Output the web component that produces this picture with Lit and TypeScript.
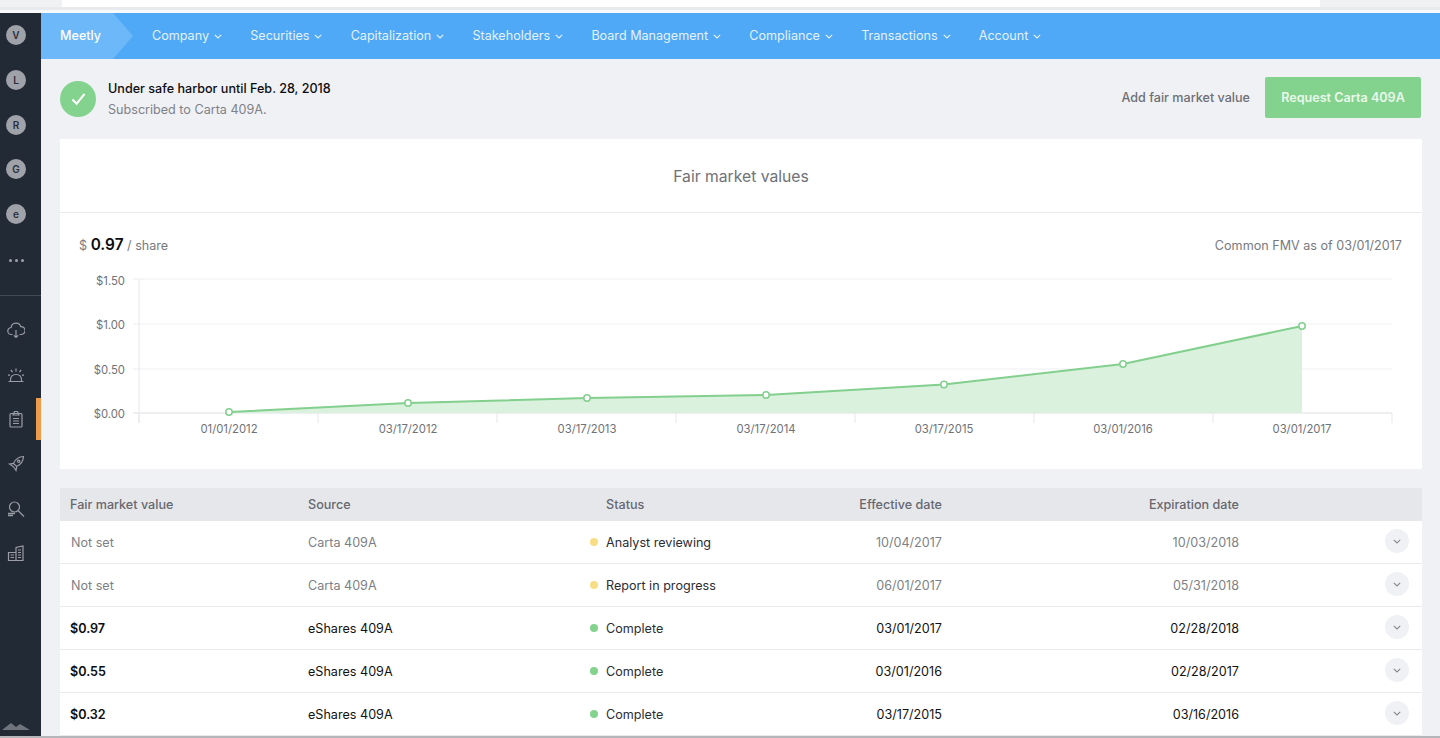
import { LitElement, html, css, svg } from "lit";
import { customElement } from "lit/decorators.js";

const navItems = [
  "Company",
  "Securities",
  "Capitalization",
  "Stakeholders",
  "Board Management",
  "Compliance",
  "Transactions",
  "Account",
];

const avatars = ["V", "L", "R", "G", "e"];

const rows = [
  { value: "Not set", source: "Carta 409A", status: "Analyst reviewing", effective: "10/04/2017", expiration: "10/03/2018", pending: true },
  { value: "Not set", source: "Carta 409A", status: "Report in progress", effective: "06/01/2017", expiration: "05/31/2018", pending: true },
  { value: "$0.97", source: "eShares 409A", status: "Complete", effective: "03/01/2017", expiration: "02/28/2018", pending: false },
  { value: "$0.55", source: "eShares 409A", status: "Complete", effective: "03/01/2016", expiration: "02/28/2017", pending: false },
  { value: "$0.32", source: "eShares 409A", status: "Complete", effective: "03/17/2015", expiration: "03/16/2016", pending: false },
];

// chart coordinates are relative to the card (x - 60, y - 265 on the page)
const points = [
  [169, 147],
  [348, 138],
  [527, 133],
  [706, 130],
  [884, 119.5],
  [1063, 99],
  [1242, 61],
];
const xLabels = ["01/01/2012", "03/17/2012", "03/17/2013", "03/17/2014", "03/17/2015", "03/01/2016", "03/01/2017"];
const yTicks = [
  { y: 14, label: "$1.50" },
  { y: 59, label: "$1.00" },
  { y: 104, label: "$0.50" },
  { y: 148, label: "$0.00" },
];
const xTicks = [79, 258, 437, 616, 795, 974, 1153, 1332];

const sideIcons = [
  svg`<path d="M5.500 13.500H4.500a3.500 3.500 0 0 1-.4-7A5 5 0 0 1 13.800 5.600a3.900 3.900 0 0 1 .6 7.900H12.500"/><path d="M9 9v7.500M6.800 14.300 9 16.500l2.200-2.200"/>`,
  svg`<path d="M1.500 15.500h15M3.500 15.500V14c0-3.500 2.200-5.500 5.500-5.500s5.500 2 5.500 5.500v1.500"/><path d="M9 2.500v3M3.800 4l1.800 2.200M14.200 4l-1.800 2.200M1 9.200h2M15 9.200h2"/>`,
  svg`<rect x="3" y="3.500" width="12" height="13.500" rx="1"/><path d="M6.500 3.500 7.500 1.500h3l1 2 .5 1.500H6zM6 8.500h6M6 11h6M6 13.500h6"/>`,
  svg`<path d="M16.500 1.500c-4.800.3-8 2.500-10 6.800l3.200 3.200c4.300-2 6.500-5.200 6.800-10zM6.500 8.300 2.500 9l2.800 1.800M9.700 11.500 9 15.500l-1.800-2.800M5.300 10.800l1.900 1.900"/><circle cx="11.700" cy="6.300" r="1.200"/>`,
  svg`<circle cx="7.500" cy="7" r="5"/><path d="m11.200 10.800 5.800 5.700"/><path d="M1 13.500h7M1 15.500h5" stroke-width="1.500"/>`,
  svg`<path d="M1.500 8.500h7.500v8H1.500zM9 16.500V3.500l7-1.500v14.500zM3.500 11h3.500M3.500 13.500h3.500M11 6h3M11 8.500h3M11 11h3M11 13.500h3"/>`,
];

@customElement("app-root")
export class AppRoot extends LitElement {
  static styles = css`
    :host {
      display: flex;
      flex-direction: column;
      height: 738px;
      overflow: hidden;
      background: #f0f1f5;
      font-family: Inter, "Liberation Sans", sans-serif;
      font-size: 12.6px;
      color: #111;
    }
    .chrome {
      flex: none;
      height: 13px;
      box-sizing: border-box;
      background: linear-gradient(to right, #f0f1f3 62px, #fff 62px, #fff 1320px, #f0f1f3 1320px);
      border-bottom: 3px solid #f8f9fb;
      box-shadow: inset 0 -3px 0 #e9eaed;
    }
    .shell {
      flex: 1;
      min-height: 0;
      display: flex;
    }
    .footer {
      flex: none;
      height: 2px;
      background: #b5b6b9;
    }
    .side {
      flex: none;
      width: 41px;
      position: relative;
      box-sizing: border-box;
      background: #222a36;
      display: flex;
      flex-direction: column;
      align-items: center;
      padding: 12px 9px 0 0;
    }
    .avatar {
      flex: none;
      width: 20px;
      height: 20px;
      margin-bottom: 24.75px;
      border-radius: 50%;
      background: #a0a2aa;
      color: #2a303b;
      font-size: 10px;
      font-weight: 600;
      display: flex;
      align-items: center;
      justify-content: center;
    }
    .more {
      flex: none;
      display: flex;
      gap: 3px;
      margin-top: 9.75px;
      height: 36.5px;
    }
    .more i {
      width: 3px;
      height: 3px;
      border-radius: 50%;
      background: #a0a2aa;
    }
    .rule {
      flex: none;
      align-self: stretch;
      height: 1px;
      margin-right: -9px;
      background: #454b56;
      margin-bottom: 25px;
    }
    .side-icon {
      flex: none;
      width: 18px;
      height: 18px;
      margin-bottom: 26.7px;
      fill: none;
      stroke: #9a9da5;
      stroke-width: 1.2;
    }
    .marker {
      position: absolute;
      right: 0;
      top: 385px;
      width: 5px;
      height: 42px;
      background: #ef9a4a;
    }
    .hills {
      position: absolute;
      left: 2px;
      bottom: 6px;
      width: 28px;
      height: 8px;
      fill: #6f747d;
    }
    .main {
      flex: 1;
      min-width: 0;
      display: flex;
      flex-direction: column;
      overflow: hidden;
    }
    .nav {
      flex: none;
      height: 46px;
      box-sizing: border-box;
      padding-bottom: 2px;
      background: #4fa9f6;
      display: flex;
      align-items: center;
      color: #e4f1fd;
    }
    .brand {
      flex: none;
      align-self: stretch;
      width: 92px;
      height: 46px;
      box-sizing: border-box;
      padding: 0 0 2px 19px;
      display: flex;
      align-items: center;
      background: #6db8f8;
      clip-path: polygon(0 0, 72px 0, 92px 50%, 72px 100%, 0 100%);
      color: #fff;
      font-weight: 500;
    }
    .nav-list {
      display: flex;
      gap: 28.2px;
      margin-left: 19px;
    }
    .nav-item {
      display: flex;
      align-items: center;
      gap: 5px;
      white-space: nowrap;
    }
    .nav-item svg {
      width: 8px;
      height: 5px;
      fill: none;
      stroke: currentColor;
      stroke-width: 1.2;
      margin-top: 2px;
    }
    .content {
      flex: 1;
      min-height: 0;
      padding: 0 18px 0 19px;
    }
    .summary {
      height: 80px;
      box-sizing: border-box;
      padding-bottom: 3px;
      display: flex;
      align-items: center;
      gap: 12px;
    }
    .check {
      flex: none;
      width: 36px;
      height: 36px;
      margin-top: 2px;
      border-radius: 50%;
      background: #83d38e;
      display: flex;
      align-items: center;
      justify-content: center;
    }
    .check svg {
      width: 15px;
      height: 14px;
      fill: none;
      stroke: #fff;
      stroke-width: 2.2;
    }
    .summary-text {
      flex: 1;
      display: flex;
      flex-direction: column;
      gap: 6px;
      margin-top: 2px;
    }
    .summary-title {
      font-weight: 500;
      color: #0d0d0f;
    }
    .summary-sub {
      color: #7f8188;
    }
    .add {
      color: #6d6f76;
      font-weight: 500;
    }
    .request {
      flex: none;
      width: 156px;
      height: 41px;
      margin-left: 3px;
      margin-right: 1px;
      border-radius: 2px;
      background: #83d38e;
      color: #eaf8ec;
      font-weight: 600;
      display: flex;
      align-items: center;
      justify-content: center;
    }
    .card {
      height: 330px;
      background: #fff;
      display: flex;
      flex-direction: column;
    }
    .card-title {
      flex: none;
      height: 74px;
      box-sizing: border-box;
      padding-top: 2px;
      border-bottom: 1px solid #e9eaee;
      display: flex;
      align-items: center;
      justify-content: center;
      font-size: 15.7px;
      color: #6f7178;
    }
    .price-row {
      flex: none;
      display: flex;
      justify-content: space-between;
      align-items: center;
      height: 64px;
      margin-bottom: -12px;
      padding: 0 20px 0 19px;
      color: #77797f;
    }
    .price {
      margin-top: -2px;
    }
    .price b {
      font-size: 15.4px;
      font-weight: 600;
      color: #0d0d0f;
    }
    .chart {
      display: block;
      flex: none;
      width: 1362px;
      height: 190px;
    }
    .chart text {
      font-size: 11.3px;
      fill: #6f7178;
    }
    .grid {
      stroke: #eeeff3;
    }
    .axis {
      stroke: #e6e7eb;
    }
    .area {
      fill: #d9f1dd;
    }
    .line {
      fill: none;
      stroke: #83cf8e;
      stroke-width: 2;
    }
    .node {
      fill: #fff;
      stroke: #83cf8e;
      stroke-width: 1.5;
    }
    .table {
      margin-top: 19px;
      background: #fff;
    }
    .tr {
      display: grid;
      grid-template-columns: 248px 282px 212px 140px 297px 1fr;
      align-items: center;
      height: 43px;
      box-sizing: border-box;
      border-bottom: 1px solid #e9eaee;
    }
    .tr.head {
      height: 33px;
      padding-bottom: 1px;
      border-bottom: 0;
      background: #e6e7eb;
      color: #66686f;
      font-weight: 500;
    }
    .tr.pending {
      color: #7d7f86;
    }
    .first {
      padding-left: 10px;
    }
    .pending .first {
      padding-left: 11px;
    }
    .tr.done .first {
      font-weight: 600;
      color: #0d0d0f;
    }
    .state {
      display: flex;
      align-items: center;
      gap: 8px;
      color: #2b2d33;
    }
    .head .state {
      padding-left: 16px;
      color: inherit;
    }
    .dot {
      flex: none;
      width: 8px;
      height: 8px;
      border-radius: 50%;
      background: #83d38e;
    }
    .pending .dot {
      background: #f7dd85;
    }
    .date {
      text-align: right;
    }
    .expander {
      justify-self: end;
      margin: -2px 13px 0 0;
      width: 24px;
      height: 24px;
      border-radius: 50%;
      background: #f0f1f4;
      display: flex;
      align-items: center;
      justify-content: center;
    }
    .expander svg {
      width: 8px;
      height: 5px;
      fill: none;
      stroke: #85878d;
      stroke-width: 1.1;
    }
  `;

  private chevron() {
    return html`<svg viewBox="0 0 8 5"><path d="M.8.8 4 4 7.200.8" /></svg>`;
  }

  private renderSide() {
    return html`
      <aside class="side">
        ${avatars.map((a) => html`<div class="avatar">${a}</div>`)}
        <div class="more"><i></i><i></i><i></i></div>
        <div class="rule"></div>
        ${sideIcons.map((p) => html`<svg class="side-icon" viewBox="0 0 18 18">${p}</svg>`)}
        <div class="marker"></div>
        <svg class="hills" viewBox="0 0 28 8"><path d="M0 8 9 1l5 4 4-3 10 6z" /></svg>
      </aside>
    `;
  }

  private renderChart() {
    const line = points.map((p) => p.join(",")).join(" ");
    const area = `169,148 ${line} 1242,148`;
    return html`
      <svg class="chart" viewBox="0 0 1362 190">
        ${yTicks.map(
          (t) => svg`
            <line class="grid" x1="73" x2="1332" y1=${t.y} y2=${t.y}></line>
            <text x="65" y=${t.y + (t.y === 14 ? 6 : 5)} text-anchor="end">${t.label}</text>
          `
        )}
        <line class="axis" x1="79" x2="79" y1="14" y2="158"></line>
        <line class="axis" x1="73" x2="1332" y1="148" y2="148"></line>
        ${xTicks.map((x) => svg`<line class="axis" x1=${x} x2=${x} y1="148" y2="158"></line>`)}
        <polygon class="area" points=${area}></polygon>
        <polyline class="line" points=${line}></polyline>
        ${points.map((p) => svg`<circle class="node" cx=${p[0]} cy=${p[1]} r="3.2"></circle>`)}
        ${points.map((p, i) => svg`<text x=${p[0]} y="168" text-anchor="middle">${xLabels[i]}</text>`)}
      </svg>
    `;
  }

  render() {
    return html`
      <div class="chrome"></div>
      <div class="shell">
        ${this.renderSide()}
        <div class="main">
          <nav class="nav">
            <div class="brand">Meetly</div>
            <div class="nav-list">
              ${navItems.map((n) => html`<div class="nav-item">${n}${this.chevron()}</div>`)}
            </div>
          </nav>
          <div class="content">
            <div class="summary">
              <div class="check">
                <svg viewBox="0 0 16 14"><path d="M1.500 7.500 6 12 14.500 1.500" /></svg>
              </div>
              <div class="summary-text">
                <div class="summary-title">Under safe harbor until Feb. 28, 2018</div>
                <div class="summary-sub">Subscribed to Carta 409A.</div>
              </div>
              <div class="add">Add fair market value</div>
              <div class="request">Request Carta 409A</div>
            </div>
            <section class="card">
              <div class="card-title">Fair market values</div>
              <div class="price-row">
                <div class="price">$ <b>0.97</b> / share</div>
                <div>Common FMV as of 03/01/2017</div>
              </div>
              ${this.renderChart()}
            </section>
            <section class="table">
              <div class="tr head">
                <div class="first">Fair market value</div>
                <div>Source</div>
                <div class="state">Status</div>
                <div class="date">Effective date</div>
                <div class="date">Expiration date</div>
                <div></div>
              </div>
              ${rows.map(
                (r) => html`
                  <div class="tr ${r.pending ? "pending" : "done"}">
                    <div class="first">${r.value}</div>
                    <div>${r.source}</div>
                    <div class="state"><span class="dot"></span>${r.status}</div>
                    <div class="date">${r.effective}</div>
                    <div class="date">${r.expiration}</div>
                    <div class="expander">${this.chevron()}</div>
                  </div>
                `
              )}
            </section>
          </div>
        </div>
      </div>
      <div class="footer"></div>
    `;
  }
}
